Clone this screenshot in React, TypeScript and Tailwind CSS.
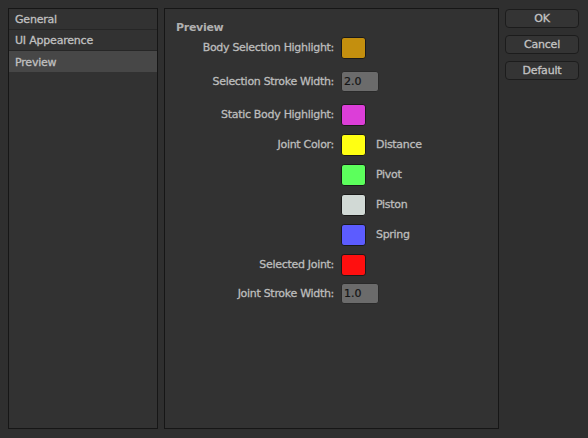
import React from "react";

const font = { fontFamily: '"DejaVu Sans", "Liberation Sans", sans-serif' };

function Swatch({ color }: { color: string }) {
  return (
    <div
      className="w-[25px] h-[22px] rounded-[3px] border border-[#1a1a1a]"
      style={{ backgroundColor: color }}
    />
  );
}

function NumInput({ value }: { value: string }) {
  return (
    <div className="w-[38px] h-[21px] rounded-[3px] border border-[#2a2a2a] bg-[#6b6b6b] text-[#141414] text-[11px] leading-[20px] pl-[2px] [-webkit-text-stroke:0.2px]">
      {value}
    </div>
  );
}

function Row({
  label,
  children,
  legend,
  mt,
}: {
  label?: string;
  children: React.ReactNode;
  legend?: string;
  mt: string;
}) {
  return (
    <div className={`flex items-center ${mt}`}>
      <div className="w-[176px] pr-[7px] pt-[1px] text-right text-[11px] tracking-[-0.3px] text-[#bdbdbd] whitespace-nowrap [-webkit-text-stroke:0.3px]">
        {label}
      </div>
      {children}
      {legend && (
        <div className="ml-[10px] pt-[1px] text-[11px] tracking-[-0.3px] text-[#bdbdbd] [-webkit-text-stroke:0.3px]">
          {legend}
        </div>
      )}
    </div>
  );
}

const item =
  "h-[21px] px-[6px] pt-[2px] text-[11px] tracking-[-0.2px] text-[#c0c0c0] [-webkit-text-stroke:0.3px]";

export default function App() {
  return (
    <div
      className="w-[588px] h-[438px] bg-[#2f2f2f] flex pt-[8px] pl-[8px] gap-[6px]"
      style={font}
    >
      <div className="w-[150px] h-[421px] border border-[#161616] bg-[#323232] flex flex-col">
        <div className={`${item} border-b border-[#262626] leading-[18px]`}>General</div>
        <div className={`${item} border-b border-[#262626] leading-[18px]`}>UI Appearence</div>
        <div className={`${item} bg-[#474747] leading-[19px]`}>Preview</div>
      </div>

      <div className="w-[335px] h-[421px] border border-[#161616] bg-[#323232] flex flex-col">
        <div className="pt-[12px] pl-[11px] text-[11px] font-bold tracking-[-0.3px] leading-[14px] text-[#b0b0b0]">
          Preview
        </div>
        <Row label="Body Selection Highlight:" mt="mt-[2px]">
          <Swatch color="#c48f0e" />
        </Row>
        <Row label="Selection Stroke Width:" mt="mt-[12px]">
          <NumInput value="2.0" />
        </Row>
        <Row label="Static Body Highlight:" mt="mt-[12px]">
          <Swatch color="#dc3ed8" />
        </Row>
        <Row label="Joint Color:" legend="Distance" mt="mt-[8px]">
          <Swatch color="#ffff12" />
        </Row>
        <Row legend="Pivot" mt="mt-[8px]">
          <Swatch color="#5cff5c" />
        </Row>
        <Row legend="Piston" mt="mt-[8px]">
          <Swatch color="#d1d9d5" />
        </Row>
        <Row legend="Spring" mt="mt-[8px]">
          <Swatch color="#5c5cff" />
        </Row>
        <Row label="Selected Joint:" mt="mt-[8px]">
          <Swatch color="#ff0f0f" />
        </Row>
        <Row label="Joint Stroke Width:" mt="mt-[7px]">
          <NumInput value="1.0" />
        </Row>
      </div>

      <div className="flex flex-col gap-[7px] pt-[1px]">
        {["OK", "Cancel", "Default"].map((b) => (
          <div
            key={b}
            className="w-[74px] h-[19px] rounded-[4px] border border-[#1c1c1c] bg-[#343434] text-center text-[11px] tracking-[-0.2px] leading-[18px] text-[#c4c4c4] [-webkit-text-stroke:0.3px]"
          >
            {b}
          </div>
        ))}
      </div>
    </div>
  );
}
